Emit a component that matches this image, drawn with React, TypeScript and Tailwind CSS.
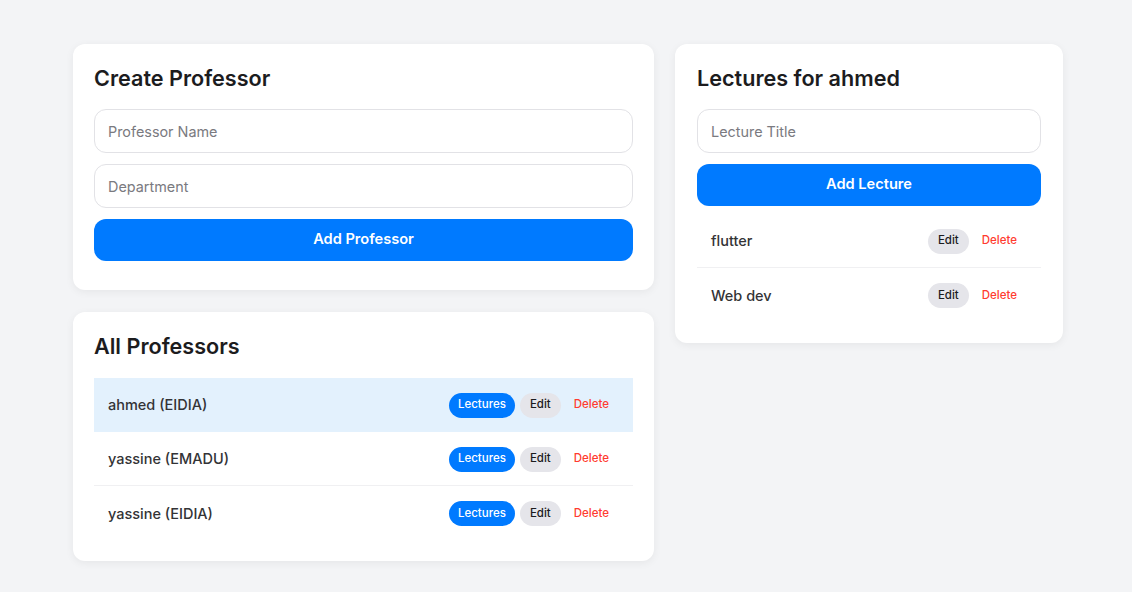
import React, { useState } from 'react';

type Professor = { id: number; name: string; department: string };
type Lecture = { id: number; title: string };

export default function App() {
  const [professors] = useState<Professor[]>([
    { id: 1, name: 'ahmed', department: 'EIDIA' },
    { id: 2, name: 'yassine', department: 'EMADU' },
    { id: 3, name: 'yassine', department: 'EIDIA' },
  ]);
  const [selectedId, setSelectedId] = useState(1);
  const [lectures] = useState<Lecture[]>([
    { id: 1, title: 'flutter' },
    { id: 2, title: 'Web dev' },
  ]);

  const selected = professors.find((p) => p.id === selectedId);

  const inputClass =
    'w-full h-[44px] px-[13px] rounded-[12px] border border-[#e2e2e6] bg-white text-[14.4px] text-[#1c1c1e] placeholder:text-[#7a7a80] outline-none';
  const primaryBtn =
    'w-full h-[42px] rounded-[12px] bg-[#007aff] text-white text-[14.6px] font-semibold';

  return (
    <div
      className="min-h-screen bg-[#f3f4f6] pt-[44px] pl-[73px]"
      style={{ fontFamily: 'Inter, "Noto Sans", sans-serif' }}
    >
      <div className="flex items-start gap-[21px]">
        {/* Left column */}
        <div className="w-[581px] flex flex-col gap-[22px]">
          <div className="bg-white rounded-[12px] shadow-[0_2px_8px_rgba(0,0,0,0.06)] px-[21px] pt-[21px] pb-[21px]">
            <h2 className="text-[21.6px] leading-[26px] font-semibold text-[#1c1c1e] mb-[18px]">Create Professor</h2>
            <div className="flex flex-col gap-[11px]">
              <input className={inputClass} placeholder="Professor Name" />
              <input className={inputClass} placeholder="Department" />
              <button className={`${primaryBtn} mb-[8px]`}>Add Professor</button>
            </div>
          </div>

          <div className="bg-white rounded-[12px] shadow-[0_2px_8px_rgba(0,0,0,0.06)] px-[21px] pt-[21px] pb-[21px]">
            <h2 className="text-[21.6px] leading-[26px] font-semibold text-[#1c1c1e] mb-[19px]">All Professors</h2>
            <div>
              {professors.map((p, i) => (
                <div
                  key={p.id}
                  className={`flex items-center justify-between h-[54px] pt-[1px] pl-[14px] pr-[14px] ${
                    i < professors.length - 1 ? 'border-b border-[#f0f0f2]' : ''
                  } ${p.id === selectedId ? 'bg-[#e3f1fd] border-transparent' : ''}`}
                >
                  <span className="text-[14.5px] font-medium text-[#333336]">
                    {p.name} ({p.department})
                  </span>
                  <div className="flex items-center">
                    <button
                      onClick={() => setSelectedId(p.id)}
                      className="h-[25px] px-[9px] rounded-full bg-[#007aff] text-white text-[11.5px] font-medium"
                    >
                      Lectures
                    </button>
                    <button className="ml-[5px] h-[25px] px-[10px] rounded-full bg-[#e5e5ea] text-[#1c1c1e] text-[11.5px] font-medium">
                      Edit
                    </button>
                    <button className="ml-[3px] h-[25px] px-[10px] text-[#ff3b30] text-[11.5px] font-medium">
                      Delete
                    </button>
                  </div>
                </div>
              ))}
            </div>
          </div>
        </div>

        {/* Right column */}
        <div className="w-[388px] bg-white rounded-[12px] shadow-[0_2px_8px_rgba(0,0,0,0.06)] px-[22px] pt-[21px] pb-[21px]">
          <h2 className="text-[21.6px] leading-[26px] font-semibold text-[#1c1c1e] mb-[18px]">
            Lectures for {selected?.name}
          </h2>
          <div className="flex flex-col gap-[11px]">
            <input className={inputClass} placeholder="Lecture Title" />
            <button className={`${primaryBtn} mb-[8px]`}>Add Lecture</button>
          </div>
          <div>
            {lectures.map((l, i) => (
              <div
                key={l.id}
                className={`flex items-center justify-between h-[54px] pt-[1px] pl-[14px] pr-[14px] ${
                  i < lectures.length - 1 ? 'border-b border-[#f0f0f2]' : ''
                }`}
              >
                <span className="text-[14.5px] font-medium text-[#333336]">{l.title}</span>
                <div className="flex items-center">
                  <button className="h-[25px] px-[10px] rounded-full bg-[#e5e5ea] text-[#1c1c1e] text-[11.5px] font-medium">
                    Edit
                  </button>
                  <button className="ml-[3px] h-[25px] px-[10px] text-[#ff3b30] text-[11.5px] font-medium">
                    Delete
                  </button>
                </div>
              </div>
            ))}
          </div>
        </div>
      </div>
    </div>
  );
}
